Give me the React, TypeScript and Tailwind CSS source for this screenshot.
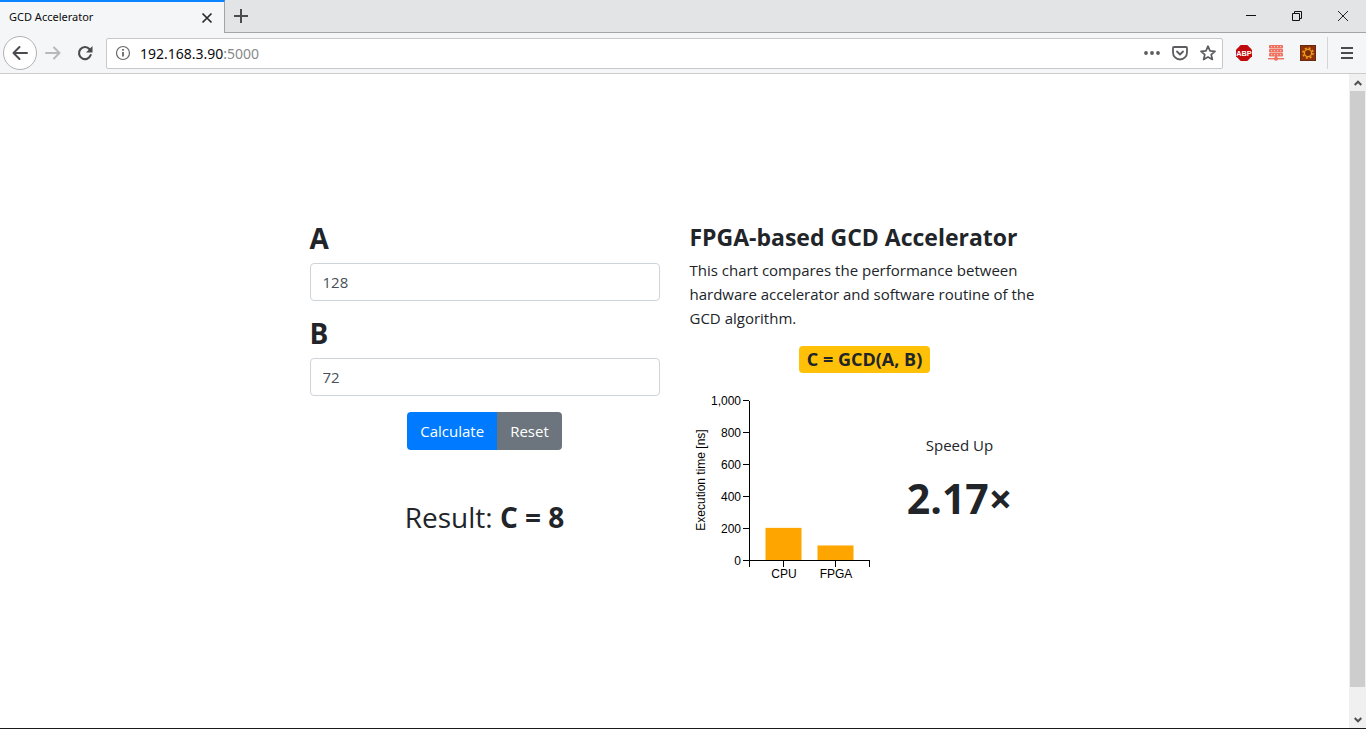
import { useState } from "react";
import type { FormEvent, ReactNode } from "react";

function IconButton({ label, className = "", children }: { label: string; className?: string; children: ReactNode }) {
  return (
    <button type="button" aria-label={label} className={`flex shrink-0 items-center justify-center ${className}`}>
      {children}
    </button>
  );
}

function TitleBar() {
  return (
    <header className="flex h-[33px] shrink-0 bg-[#e3e4e6]">
      <div className="flex w-[225px] items-center justify-between border-t-2 border-r border-t-[#0a84ff] border-r-[#a3a4a6] bg-[#f5f6f7] pr-[7px] pl-[9px]">
        <span className="font-['Noto_Sans',sans-serif] text-[11px] text-[#0c0c0d]">GCD Accelerator</span>
        <IconButton label="Close tab" className="h-5 w-5">
          <svg width="12" height="12" viewBox="0 0 12 12" fill="none" stroke="#2a2a2c" strokeWidth="1.7">
            <path d="M1.5 1.5l9 9M10.5 1.5l-9 9" />
          </svg>
        </IconButton>
      </div>
      <div className="flex flex-1 items-center justify-between border-b border-[#a3a4a6]">
        <IconButton label="New tab" className="h-8 w-8">
          <svg width="14" height="14" viewBox="0 0 14 14" fill="none" stroke="#4a4a4f" strokeWidth="2">
            <path d="M7 0v14M0 7h14" />
          </svg>
        </IconButton>
        <div className="flex">
          <IconButton label="Minimize" className="h-8 w-[46px]">
            <svg width="10" height="10" viewBox="0 0 10 10" fill="none" stroke="#111">
              <path d="M0 4.5h10" />
            </svg>
          </IconButton>
          <IconButton label="Restore" className="h-8 w-[46px]">
            <svg width="10" height="10" viewBox="0 0 10 10" fill="none" stroke="#111">
              <path d="M.5 2.5h7v7h-7zM2.5 2.5v-2h7v7h-2" />
            </svg>
          </IconButton>
          <IconButton label="Close" className="h-8 w-[46px]">
            <svg width="10" height="10" viewBox="0 0 10 10" fill="none" stroke="#222">
              <path d="M0 0l10 10M10 0L0 10" />
            </svg>
          </IconButton>
        </div>
      </div>
    </header>
  );
}

function AdBlockIcon() {
  return (
    <svg width="16" height="16" viewBox="0 0 16 16">
      <path d="M4.7 0h6.6L16 4.7v6.6L11.3 16H4.7L0 11.3V4.7z" fill="#c00a0e" />
      <text x="8" y="10.8" textAnchor="middle" fontSize="7.4" fontWeight="700" fill="#fff" fontFamily="Liberation Sans, sans-serif">
        ABP
      </text>
    </svg>
  );
}

function ProxyIcon() {
  return (
    <svg width="16" height="16" viewBox="0 0 16 16">
      <g fill="#f0705f">
        <rect x="1" y="0" width="14" height="3.4" rx="1" />
        <rect x="1" y="4" width="14" height="3.4" rx="1" />
        <rect x="1" y="8" width="14" height="3.4" rx="1" />
        <rect x="7" y="11" width="2" height="3" />
        <rect x="0" y="13" width="16" height="1.4" />
        <circle cx="8" cy="13.8" r="2" />
      </g>
      <path
        d="M3 1.7h1.2M6 1.7h1.2M9 1.7h1.2M12 1.7h1.2M3 5.7h1.2M6 5.7h1.2M9 5.7h1.2M12 5.7h1.2M3 9.7h1.2M6 9.7h1.2M9 9.7h1.2M12 9.7h1.2"
        stroke="#fbd9d4"
        strokeWidth="1"
      />
    </svg>
  );
}

function GearBoxIcon() {
  return (
    <svg width="16" height="16" viewBox="0 0 16 16">
      <rect width="16" height="16" fill="#6b2a10" />
      <rect x="1" y="1" width="14" height="14" fill="#8f3208" />
      <circle cx="8" cy="8" r="5" fill="none" stroke="#f29a1f" strokeWidth="1.6" strokeDasharray="2 1.93" />
      <circle cx="8" cy="8" r="3.6" fill="#7d2c0a" stroke="#f29a1f" strokeWidth="1.3" />
    </svg>
  );
}

function ToolBar() {
  return (
    <nav className="flex h-[41px] shrink-0 items-center border-b border-[#cccccd] bg-[#f5f6f7] pl-[3px]">
      <IconButton label="Back" className="h-[34px] w-[34px] rounded-full border border-[#b1b1b3] bg-white">
        <svg width="16" height="16" viewBox="0 0 16 16" fill="none" stroke="#4a4a4f" strokeWidth="2" strokeLinecap="round" strokeLinejoin="round">
          <path d="M15 8H1.5M7.5 2L1.5 8l6 6" />
        </svg>
      </IconButton>
      <IconButton label="Forward" className="h-8 w-8">
        <svg width="16" height="16" viewBox="0 0 16 16" fill="none" stroke="#b7b8ba" strokeWidth="2" strokeLinecap="round" strokeLinejoin="round">
          <path d="M1 8h13.5M9 2.5L14.5 8 9 13.5" />
        </svg>
      </IconButton>
      <IconButton label="Reload" className="h-8 w-8">
        <svg width="16" height="16" viewBox="0 0 16 16">
          <path d="M12.6 4.2A6 6 0 1 0 13.7 10" fill="none" stroke="#4a4a4f" strokeWidth="2.1" strokeLinecap="round" />
          <path d="M15.5 1v6.5H9z" fill="#4a4a4f" />
        </svg>
      </IconButton>
      <div className="ml-[5px] flex h-[31px] flex-1 items-center rounded-[2px] border border-[#c8c8ca] bg-white pr-[6px] pl-2">
        <svg className="shrink-0" width="16" height="16" viewBox="0 0 16 16" fill="none" stroke="#68686c">
          <circle cx="8" cy="8" r="6.5" strokeWidth="1.2" />
          <path d="M8 7v4.5M8 4v1.8" strokeWidth="1.8" />
        </svg>
        <a href="#page" className="ml-[9px] font-['Noto_Sans',sans-serif] text-[14px] text-[#0c0c0d]">
          192.168.3.90<span className="text-[#8a8a8d]">:5000</span>
        </a>
        <div className="ml-auto flex gap-3">
          <IconButton label="Page actions">
            <svg width="16" height="16" viewBox="0 0 16 16" fill="#5c5c60">
              <circle cx="2" cy="8" r="1.9" />
              <circle cx="8" cy="8" r="1.9" />
              <circle cx="14" cy="8" r="1.9" />
            </svg>
          </IconButton>
          <IconButton label="Save to Pocket">
            <svg width="16" height="16" viewBox="0 0 16 16" fill="none" stroke="#5c5c60" strokeWidth="1.8" strokeLinecap="round" strokeLinejoin="round">
              <path d="M2 2h12a1 1 0 0 1 1 1v4.5a7 7 0 0 1-14 0V3a1 1 0 0 1 1-1z" />
              <path d="M5 6.5l3 3 3-3" />
            </svg>
          </IconButton>
          <IconButton label="Bookmark this page">
            <svg width="16" height="16" viewBox="0 0 16 16" fill="none" stroke="#5c5c60" strokeWidth="1.7" strokeLinejoin="round">
              <path d="M8 1.2l2 4.6 5 .5-3.8 3.3 1.2 4.9L8 12l-4.4 2.5 1.2-4.9L1 6.3l5-.5z" />
            </svg>
          </IconButton>
        </div>
      </div>
      <div className="flex items-center gap-4 pr-[11px] pl-[13px]">
        <IconButton label="Adblock Plus"><AdBlockIcon /></IconButton>
        <IconButton label="Proxy settings"><ProxyIcon /></IconButton>
        <IconButton label="Extension settings"><GearBoxIcon /></IconButton>
      </div>
      <div className="flex h-8 w-[39px] items-center justify-center border-l border-[#d5d5d7]">
        <IconButton label="Open menu">
          <svg width="12" height="12" viewBox="0 0 12 12" fill="none" stroke="#4a4a4f" strokeWidth="2">
            <path d="M0 1h12M0 6h12M0 11h12" />
          </svg>
        </IconButton>
      </div>
    </nav>
  );
}

function ScrollBar() {
  return (
    <div className="flex w-[17px] shrink-0 flex-col border-x border-[#f0f0f0] bg-[#f0f0f0]">
      <IconButton label="Scroll up" className="h-[17px]">
        <svg width="8" height="6" viewBox="0 0 8 6" fill="none" stroke="#505050" strokeWidth="2">
          <path d="M.7 5L4 1.7 7.3 5" />
        </svg>
      </IconButton>
      <div className="h-[596px] shrink bg-[#cdcdcd]" />
      <div className="flex-1" />
      <IconButton label="Scroll down" className="h-[17px]">
        <svg width="8" height="6" viewBox="0 0 8 6" fill="none" stroke="#505050" strokeWidth="2">
          <path d="M.7 1L4 4.3 7.3 1" />
        </svg>
      </IconButton>
    </div>
  );
}

const ticks = [0, 200, 400, 600, 800, 1000];
const bars = [
  { name: "CPU", value: 204 },
  { name: "FPGA", value: 94 },
];

function TimeChart() {
  const base = 170.5;
  return (
    <svg width="190" height="200" viewBox="0 0 190 200" fontFamily="Liberation Sans, Arial, sans-serif" fontSize="12" role="img" aria-label="Execution time">
      {bars.map((bar, i) => (
        <rect key={bar.name} x={75.5 + i * 52} y={base - bar.value * 0.16} width="36" height={bar.value * 0.16} fill="#ffa500" />
      ))}
      <g fill="none" stroke="#000" shapeRendering="crispEdges">
        <path d="M59.5 10.5V176.5M59.5 170.5H179.5V176.5" />
        {ticks.map((t) => (
          <path key={t} d={`M53 ${base - t * 0.16}h6`} />
        ))}
        {bars.map((bar, i) => (
          <path key={bar.name} d={`M${93.5 + i * 52} 170.5v6`} />
        ))}
      </g>
      {ticks.map((t) => (
        <text key={t} x="51" y={base - t * 0.16 + 4} textAnchor="end">
          {t.toLocaleString("en-US")}
        </text>
      ))}
      {bars.map((bar, i) => (
        <text key={bar.name} x={94 + i * 52} y="188" textAnchor="middle">
          {bar.name}
        </text>
      ))}
      <text transform="translate(15 90) rotate(-90)" textAnchor="middle">
        Execution time [ns]
      </text>
    </svg>
  );
}

function gcd(a: number, b: number): number {
  return b === 0 ? a : gcd(b, a % b);
}

function NumberField({ name, value, onChange }: { name: string; value: string; onChange: (v: string) => void }) {
  return (
    <div className="mb-4">
      <label htmlFor={name} className="mb-2 block text-[28px] leading-[33px] font-bold">
        {name}
      </label>
      <input
        id={name}
        type="text"
        inputMode="numeric"
        value={value}
        onChange={(e) => onChange(e.target.value)}
        className="block h-[38px] w-full rounded border border-[#ced4da] bg-white px-3 text-[15px] text-[#495057]"
      />
    </div>
  );
}

function Calculator() {
  const [a, setA] = useState("128");
  const [b, setB] = useState("72");
  const [result, setResult] = useState(8);

  const submit = (e: FormEvent) => {
    e.preventDefault();
    setResult(gcd(Number(a) || 0, Number(b) || 0));
  };
  const reset = () => {
    setA("");
    setB("");
    setResult(0);
  };

  return (
    <form onSubmit={submit}>
      <NumberField name="A" value={a} onChange={setA} />
      <NumberField name="B" value={b} onChange={setB} />
      <div className="flex justify-center">
        <button type="submit" className="h-[38px] rounded-l bg-[#007bff] px-[13px] text-[15px] text-white">
          Calculate
        </button>
        <button type="button" onClick={reset} className="h-[38px] rounded-r bg-[#6c757d] px-[13px] text-[15px] text-white">
          Reset
        </button>
      </div>
      <p className="mt-[50px] text-center text-[28px] leading-[34px]">
        Result: <b>C = {result}</b>
      </p>
    </form>
  );
}

function Comparison() {
  return (
    <section>
      <h1 className="mb-[6px] text-[23px] leading-[30px] font-bold whitespace-nowrap">FPGA-based GCD Accelerator</h1>
      <p className="mb-4 text-[15px] leading-6">
        This chart compares the performance between hardware accelerator and software routine of the GCD algorithm.
      </p>
      <div className="flex justify-center">
        <span className="rounded bg-[#ffc107] px-2 text-[18px] leading-[27px] font-bold">C = GCD(A, B)</span>
      </div>
      <div className="mt-[17px] flex">
        <TimeChart />
        <div className="flex-1 pt-[43px] text-center">
          <p className="text-[15px] leading-6">Speed Up</p>
          <p className="mt-4 text-[41px] leading-[50px] font-bold">2.17×</p>
        </div>
      </div>
    </section>
  );
}

export default function App() {
  return (
    <div className="flex h-screen flex-col overflow-hidden border-b border-[#1a1a1a] bg-white">
      <TitleBar />
      <ToolBar />
      <div className="flex min-h-0 flex-1">
        <main id="page" className="min-w-0 flex-1 overflow-hidden pt-[148px] font-['Open_Sans','Noto_Sans',sans-serif] text-[#212529]">
          <div className="mx-auto grid max-w-[730px] grid-cols-2 gap-[30px]">
            <Calculator />
            <Comparison />
          </div>
        </main>
        <ScrollBar />
      </div>
    </div>
  );
}
